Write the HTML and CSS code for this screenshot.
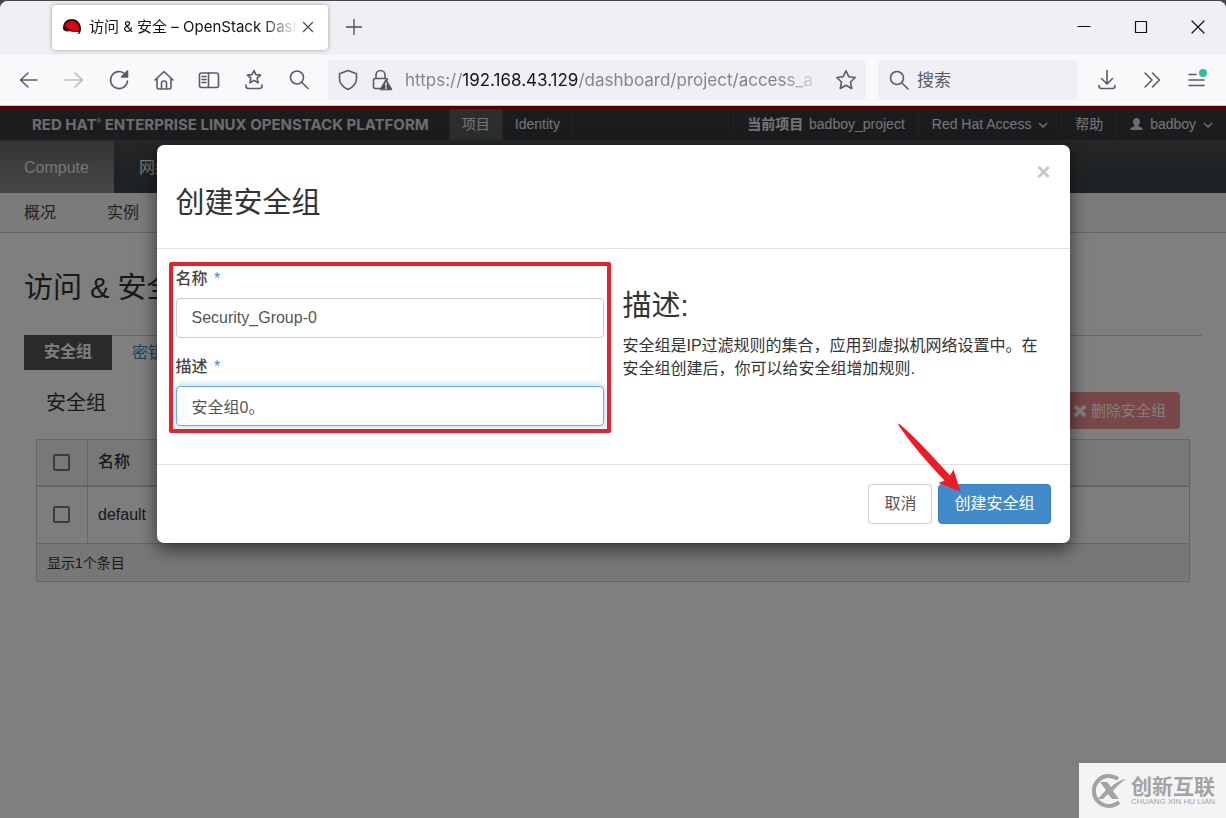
FILE: index.html
```html
<!DOCTYPE html>
<html lang="zh-CN">
<head>
<meta charset="utf-8">
<title>访问 &amp; 安全 – OpenStack Dashboard</title>
<link rel="stylesheet" href="styles.css">
</head>
<body>
<header class="browser">
  <div class="tabstrip">
    <div class="tab">
      <svg class="favicon" width="20" height="18" viewBox="0 0 20 18"><path d="M1 10C1 4 5 1 10 1s9 4 9 10c0 3-1 4-2 5L3 13C1 12 1 11 1 10z" fill="#2a1010"/><path d="M3 8c1-4 4-5 8-5 4 1 6 4 6 9l-1 2C12 13 7 12 3 8z" fill="#e3000f"/><path d="M5 12c3 2 8 2 12 2-1 3-8 3-12-2z" fill="#fff"/></svg>
      <span class="tab-title">访问 &amp; 安全 – OpenStack Dash</span>
      <button class="tab-close" aria-label="关闭标签页"><svg width="12" height="12" viewBox="0 0 12 12"><path d="M1.500 1.500l9 9m0-9l-9 9" class="thin"/></svg></button>
    </div>
    <button class="new-tab" aria-label="新标签页"><svg width="16" height="16" viewBox="0 0 16 16"><path d="M8 .5v15M.5 8h15" class="thin"/></svg></button>
    <div class="window-controls">
      <button aria-label="最小化"><svg width="14" height="14" viewBox="0 0 14 14"><path d="M1 6.500h12" class="win"/></svg></button>
      <button aria-label="最大化"><svg width="14" height="14" viewBox="0 0 14 14"><path d="M1.500 1.500h11v11h-11z" class="win"/></svg></button>
      <button aria-label="关闭"><svg width="14" height="14" viewBox="0 0 14 14"><path d="M1 1l12 12M13 1L1 13" class="win"/></svg></button>
    </div>
  </div>
  <div class="toolbar">
    <div class="tools">
      <button aria-label="后退"><svg width="22" height="22" viewBox="0 0 22 22"><path d="M19 11H3m7-7l-7.500 7 7.500 7"/></svg></button>
      <button class="off" aria-label="前进"><svg width="22" height="22" viewBox="0 0 22 22"><path d="M2 11h17m-7-7l7.500 7-7.500 7"/></svg></button>
      <button aria-label="刷新"><svg width="22" height="22" viewBox="0 0 22 22"><path d="M19.500 12A8.500 8.500 0 1 1 17 5"/><path d="M19.500 2v6h-6z" fill="#5b5b66"/></svg></button>
      <button aria-label="主页"><svg width="22" height="22" viewBox="0 0 22 22"><path d="M2 11l9-8.500 9 8.500M4 9.500V18q0 2 2 2h10q2 0 2-2V9.500M8.500 20v-6q0-2 2.500-2t2.500 2v6"/></svg></button>
      <button aria-label="侧栏"><svg width="22" height="22" viewBox="0 0 22 22"><rect x="1.500" y="4" width="19" height="14.500" rx="2"/><path d="M10.500 4v14.500M4 7.500h4M4 10.500h4M4 13.500h4"/></svg></button>
      <button aria-label="书签"><svg width="22" height="22" viewBox="0 0 22 22"><path d="M11 1.500l1.900 4.100 4.600.5-3.400 3.100 1 4.600-4.100-2.400-4.100 2.400 1-4.600-3.400-3.100 4.600-.5zM3 16v1q0 2.500 2.500 2.500h11q2.500 0 2.500-2.500v-1"/></svg></button>
      <button aria-label="查找"><svg width="22" height="22" viewBox="0 0 22 22"><circle cx="9" cy="8.500" r="6.500"/><path d="M14 13.500l6 6"/></svg></button>
    </div>
    <div class="urlbar">
      <svg width="22" height="22" viewBox="0 0 22 22"><path d="M11 1.500l8.500 3.200v4.800c0 5-4 9-8.500 11-4.500-2-8.500-6-8.500-11V4.700z"/></svg>
      <svg width="22" height="22" viewBox="0 0 22 22"><path d="M9 19.500H4.500q-2 0-2-2v-6q0-2 2-2h10q2 0 2 1.500M5 9.500V6a4.500 4.500 0 0 1 9 0v3.500"/><path d="M15 11l5.500 9.500h-11z" fill="#4b4b55"/><path d="M15 14v3m0 1.500v1" class="mark"/></svg>
      <div class="address" role="textbox" aria-label="地址">https://<span class="host">192.168.43.129</span>/dashboard/project/access_a</div>
      <button aria-label="收藏"><svg width="22" height="22" viewBox="0 0 22 22"><path d="M11 1.800l2.800 5.900 6.400.8-4.700 4.500 1.200 6.500-5.700-3.200-5.700 3.200L6.500 13 1.800 8.500l6.400-.8z"/></svg></button>
    </div>
    <label class="searchbar">
      <svg width="22" height="22" viewBox="0 0 22 22"><circle cx="9" cy="9" r="6.500"/><path d="M14 14l6 6"/></svg>
      <input type="search" placeholder="搜索" aria-label="搜索">
    </label>
    <div class="tools">
      <button aria-label="下载"><svg width="22" height="22" viewBox="0 0 22 22"><path d="M11 1.500v13m-5.500-5l5.500 5.500 5.500-5.500M3 16.500v.5q0 2.500 2.500 2.500h11q2.500 0 2.500-2.500v-.5"/></svg></button>
      <button aria-label="更多工具"><svg width="22" height="22" viewBox="0 0 22 22"><path d="M4 4l7 7-7 7M11.500 4l7 7-7 7"/></svg></button>
      <button aria-label="菜单"><svg width="22" height="22" viewBox="0 0 22 22"><path d="M3 5.500h7M3 11h15M3 16.500h15"/><circle cx="17" cy="4" r="4" class="dot"/></svg></button>
    </div>
  </div>
</header>

<div class="viewport">
  <div class="page">
    <nav class="topnav">
      <a class="brand" href="#">RED HAT<sup>®</sup> ENTERPRISE LINUX OPENSTACK PLATFORM</a>
      <a class="topnav-item current" href="#">项目</a>
      <a class="topnav-item" href="#">Identity</a>
      <span class="spacer"></span>
      <a class="topnav-item wide" href="#"><b>当前项目</b> badboy_project</a>
      <a class="topnav-item wide" href="#">Red Hat Access <svg width="10" height="8" viewBox="0 0 10 8"><path d="M1 2l4 4 4-4"/></svg></a>
      <a class="topnav-item wide" href="#">帮助</a>
      <a class="topnav-item wide" href="#"><svg class="user" width="13" height="14" viewBox="0 0 13 14"><path d="M6.500 1C8.500 1 10 2.500 10 4.500c0 1.500-.7 2.800-1.500 3.500v1.300l4 1.700v2H.5v-2l4-1.700V8C3.700 7.300 3 6 3 4.500 3 2.500 4.500 1 6.500 1z"/></svg> badboy <svg width="10" height="8" viewBox="0 0 10 8"><path d="M1 2l4 4 4-4"/></svg></a>
    </nav>
    <nav class="mainnav">
      <a class="current" href="#">Compute</a>
      <a href="#">网络</a>
    </nav>
    <nav class="subnav">
      <a href="#">概况</a>
      <a href="#">实例</a>
    </nav>
    <main class="content">
      <h1>访问 &amp; 安全</h1>
      <div class="tabs"><a class="current" href="#">安全组</a><a href="#">密钥对</a></div>
      <section class="panel">
        <div class="panel-head">
          <h2>安全组</h2>
          <button class="danger"><svg width="14" height="14" viewBox="0 0 14 14"><path d="M2 2l10 10M12 2L2 12"/></svg>删除安全组</button>
        </div>
        <table>
          <thead><tr><th class="pick"><input type="checkbox" aria-label="全选"></th><th>名称</th></tr></thead>
          <tbody><tr><td class="pick"><input type="checkbox" aria-label="default"></td><td>default</td></tr></tbody>
          <tfoot><tr><td colspan="2">显示1个条目</td></tr></tfoot>
        </table>
      </section>
    </main>
  </div>

  <div class="backdrop">
    <form class="modal" role="dialog" aria-labelledby="modal-title">
      <div class="modal-head">
        <h2 id="modal-title">创建安全组</h2>
        <button type="button" class="close" aria-label="关闭">×</button>
      </div>
      <div class="modal-body">
        <div class="fields">
          <label for="name">名称 <span class="required">*</span></label>
          <input id="name" type="text" value="Security_Group-0">
          <label for="description">描述 <span class="required">*</span></label>
          <input id="description" class="focused" type="text" value="安全组0。">
          <div class="highlight"></div>
        </div>
        <div class="help">
          <h3>描述:</h3>
          <p>安全组是IP过滤规则的集合，应用到虚拟机网络设置中。在安全组创建后，你可以给安全组增加规则.</p>
        </div>
      </div>
      <div class="modal-foot">
        <button type="button" class="btn">取消</button>
        <div class="submit">
          <button type="submit" class="btn primary">创建安全组</button>
          <svg class="arrow" width="70" height="75" viewBox="0 0 70 75"><path d="M3 3.500L4.500 3C22 18 38 36 55 54.500L58.500 48.500 65.500 70.500 43.500 62 49.500 59.500C33 42 17 24 3 3.500z" fill="#ed1c24"/></svg>
        </div>
      </div>
    </form>
  </div>

  <aside class="watermark">
    <svg width="36" height="36" viewBox="0 0 36 36"><path d="M28 6A15 15 0 1 0 29 29" fill="none" stroke="#a3a3a3" stroke-width="4"/><path d="M10 9h7l4 5c4-4 9-7 15-8-6 4-10 8-13 12l6 8h-7l-4-5-5 5h-5l8-9z" fill="#a3a3a3"/></svg>
    <div><strong>创新互联</strong><small>CHUANG XIN HU LIAN</small></div>
  </aside>
</div>
</body>
</html>
```
FILE: styles.css
```css
* { box-sizing: border-box; }
body {
  margin: 0;
  min-height: 100vh;
  display: flex;
  flex-direction: column;
  background: #4a474c;
  font: 16px/22px "Liberation Sans", "Noto Sans CJK SC", sans-serif;
  color: #333;
}
button { border: 0; padding: 0; background: none; font: inherit; color: inherit; }
a { color: inherit; text-decoration: none; }
h1, h2, h3, p { margin: 0; font-weight: 400; }

/* Browser window */
.browser {
  margin-top: 1px;
  border-radius: 8px 8px 0 0;
  background: #f9f9fb;
  border-bottom: 1px solid #c8c8cc;
  font-family: Inter, "Noto Sans CJK SC", sans-serif;
  overflow: hidden;
}
.browser svg { flex: none; fill: none; stroke: #5b5b66; stroke-width: 1.6; stroke-linejoin: round; stroke-linecap: round; }
.browser .favicon { stroke: none; }
.browser .thin { stroke: #4b4b55; stroke-width: 1.3; }
.browser .win { stroke: #111; stroke-width: 1.2; }
.browser .mark { stroke: #fff; stroke-width: 1.3; }
.browser .dot { fill: #2ac3a2; stroke: none; }
.browser button { display: flex; align-items: center; justify-content: center; }
.tabstrip { display: flex; align-items: center; height: 54px; padding: 0 0 2px 52px; background: #f0eff4; }
.tab {
  display: flex;
  align-items: center;
  width: 276px;
  height: 45px;
  padding: 0 14px 0 10px;
  border-radius: 4px;
  background: #fff;
  box-shadow: 0 0 4px rgba(0, 0, 0, .35);
  font-size: 15px;
  color: #15141a;
}
.tab-title {
  flex: 1;
  margin-left: 7px;
  overflow: hidden;
  white-space: nowrap;
  -webkit-mask-image: linear-gradient(to left, transparent, #000 36px);
  mask-image: linear-gradient(to left, transparent, #000 36px);
}
.tab-close { width: 12px; margin-left: 4px; }
.new-tab { width: 52px; height: 45px; }
.window-controls { display: flex; margin-left: auto; }
.window-controls button { width: 57px; height: 45px; }
.toolbar { display: flex; align-items: center; height: 50px; padding: 0 7px 0 6px; }
.tools { display: flex; }
.tools button { width: 45px; height: 40px; }
.tools .off { opacity: .4; }
.urlbar, .searchbar { display: flex; align-items: center; height: 40px; border-radius: 4px; background: #f0eff4; }
.urlbar { flex: 1; min-width: 0; gap: 12px; margin: 0 12px 0 7px; padding: 0 9px; }
.address {
  flex: 1;
  overflow: hidden;
  white-space: nowrap;
  font-size: 17px;
  color: #85848a;
  -webkit-mask-image: linear-gradient(to left, transparent, #000 40px);
  mask-image: linear-gradient(to left, transparent, #000 40px);
}
.host { color: #15141a; }
.searchbar { width: 200px; margin-right: 6px; padding: 0 10px; gap: 7px; }
.searchbar input { flex: 1; min-width: 0; border: 0; padding: 0; background: none; font: inherit; font-size: 17px; outline: 0; }
.searchbar input::placeholder { color: #5b5b66; opacity: 1; }

/* Dashboard page */
.viewport { position: relative; flex: 1; display: flex; flex-direction: column; }
.page { flex: 1; background: #fff; border-top: 3px solid #a00; }
.topnav { display: flex; height: 31px; background: #35393d; color: #eaeaea; font-size: 14px; line-height: 30px; white-space: nowrap; }
.brand { margin: 0 20px 0 32px; font: 700 15px/31px Inter, sans-serif; color: #dadada; }
.brand sup { font-size: 7px; line-height: 0; vertical-align: 6px; }
.topnav-item { padding: 0 12px; border-left: 1px solid #42474b; }
.topnav-item.current { background: #575b5e; }
.topnav-item + .spacer { border-left: 1px solid #42474b; }
.topnav-item.wide { padding: 0 13px; }
.topnav b { margin-right: 2px; }
.topnav svg { margin-left: 3px; fill: none; stroke: #dadada; stroke-width: 1.6; }
.topnav .user { margin: 0 3px 0 0; fill: #dadada; stroke: none; vertical-align: -2px; }
.spacer { flex: 1; }
.mainnav { display: flex; height: 53px; border-top: 1px solid #505458; background: linear-gradient(#484c4f, #3c4347); color: #eaeaea; line-height: 53px; }
.mainnav a { padding: 0 25px; }
.mainnav .current { background: linear-gradient(#66696b, #8c8e90); padding-left: 24px; }
.subnav { display: flex; gap: 51px; height: 40px; padding-left: 24px; background: #f6f6f6; border-bottom: 1px solid #cfcfcf; line-height: 40px; color: #444; }
.content { padding: 36px 24px; }
h1 { font-size: 29px; line-height: 38px; }
.tabs { display: flex; margin-top: 28px; height: 35px; border-top: 1px solid #ccc; line-height: 34px; }
.tabs a { padding: 0 20px; color: #2e83c0; }
.tabs .current { margin-top: -1px; background: #555; color: #fff; font-weight: 700; }
.panel { padding: 22px 12px 0; }
.panel-head { display: flex; justify-content: space-between; padding: 0 10px 10px; }
.panel-head h2 { font-size: 20px; }
.danger { height: 37px; padding: 0 14px; border-radius: 4px; background: #f08e8e; color: #fff; font-size: 15px; }
.danger svg { margin-right: 4px; stroke: #fff; stroke-width: 4; vertical-align: -2px; }
table { width: 100%; border-collapse: collapse; border: 1px solid #ccc; }
th, td { padding: 0 10px; text-align: left; }
th { height: 46px; background: #f1f1f1; border-bottom: 2px solid #ccc; font-weight: 500; }
tbody td { height: 58px; background: #fafafa; }
tfoot td { height: 38px; background: #eee; border-top: 1px solid #ccc; font-size: 14px; }
.pick { width: 51px; padding: 0 16px; border-right: 1px solid #ccc; }
.pick input { display: block; appearance: none; width: 17px; height: 17px; margin: 0; border: 2px solid #777; border-radius: 2px; }

/* Modal dialog */
.backdrop { position: absolute; inset: 0; display: flex; justify-content: center; align-items: flex-start; padding: 39px 24px; background: rgba(0, 0, 0, .5); }
.modal { flex: 0 1 913px; border-radius: 7px; background: #fff; box-shadow: 0 6px 18px rgba(0, 0, 0, .6); }
.modal-head { display: flex; justify-content: space-between; padding: 16px 19px 25px; border-bottom: 1px solid #e0e0e0; }
.modal-head h2 { padding-top: 22px; font-size: 29px; line-height: 40px; }
.close { align-self: flex-start; font-size: 24px; font-weight: 700; color: #c8c8c8; }
.modal-body { display: grid; grid-template-columns: 1fr 1fr; gap: 19px; padding: 19px 19px 38px; }
.fields { position: relative; display: flex; flex-direction: column; }
.fields label { margin-bottom: 8px; font-weight: 500; color: #444; }
.required { margin-left: 2px; color: #428bca; }
.fields input { height: 40px; padding: 0 15px; border: 1px solid #ccc; border-radius: 4px; font: inherit; color: #555; outline: 0; }
.fields input + label { margin-top: 18px; }
.fields .focused { border-color: #66afe9; box-shadow: 0 0 8px rgba(102, 175, 233, .6); }
.highlight { position: absolute; inset: -6px -7px -7px; border: 4px solid #e8202c; border-radius: 2px; pointer-events: none; }
.help { padding-top: 21px; line-height: 23px; }
.help h3 { margin-bottom: 11px; font-size: 29px; line-height: 34px; }
.modal-foot { display: flex; justify-content: flex-end; gap: 6px; padding: 19px; border-top: 1px solid #e0e0e0; }
.btn { height: 40px; padding: 0 15px; border: 1px solid #ccc; border-radius: 4px; background: #fff; color: #555; }
.primary { border-color: #357ebd; background: #428bca; color: #fff; }
.submit { position: relative; }
.arrow { position: absolute; left: -43px; top: -63px; pointer-events: none; }

/* Site mark */
.watermark { position: absolute; right: 0; bottom: 0; display: flex; align-items: center; gap: 5px; width: 147px; height: 55px; padding-left: 11px; background: #f4f4f4; color: #a3a3a3; }
.watermark div { display: flex; flex-direction: column; }
.watermark strong { font-size: 21px; line-height: 22px; }
.watermark small { font-size: 8px; line-height: 8px; white-space: nowrap; }
```
